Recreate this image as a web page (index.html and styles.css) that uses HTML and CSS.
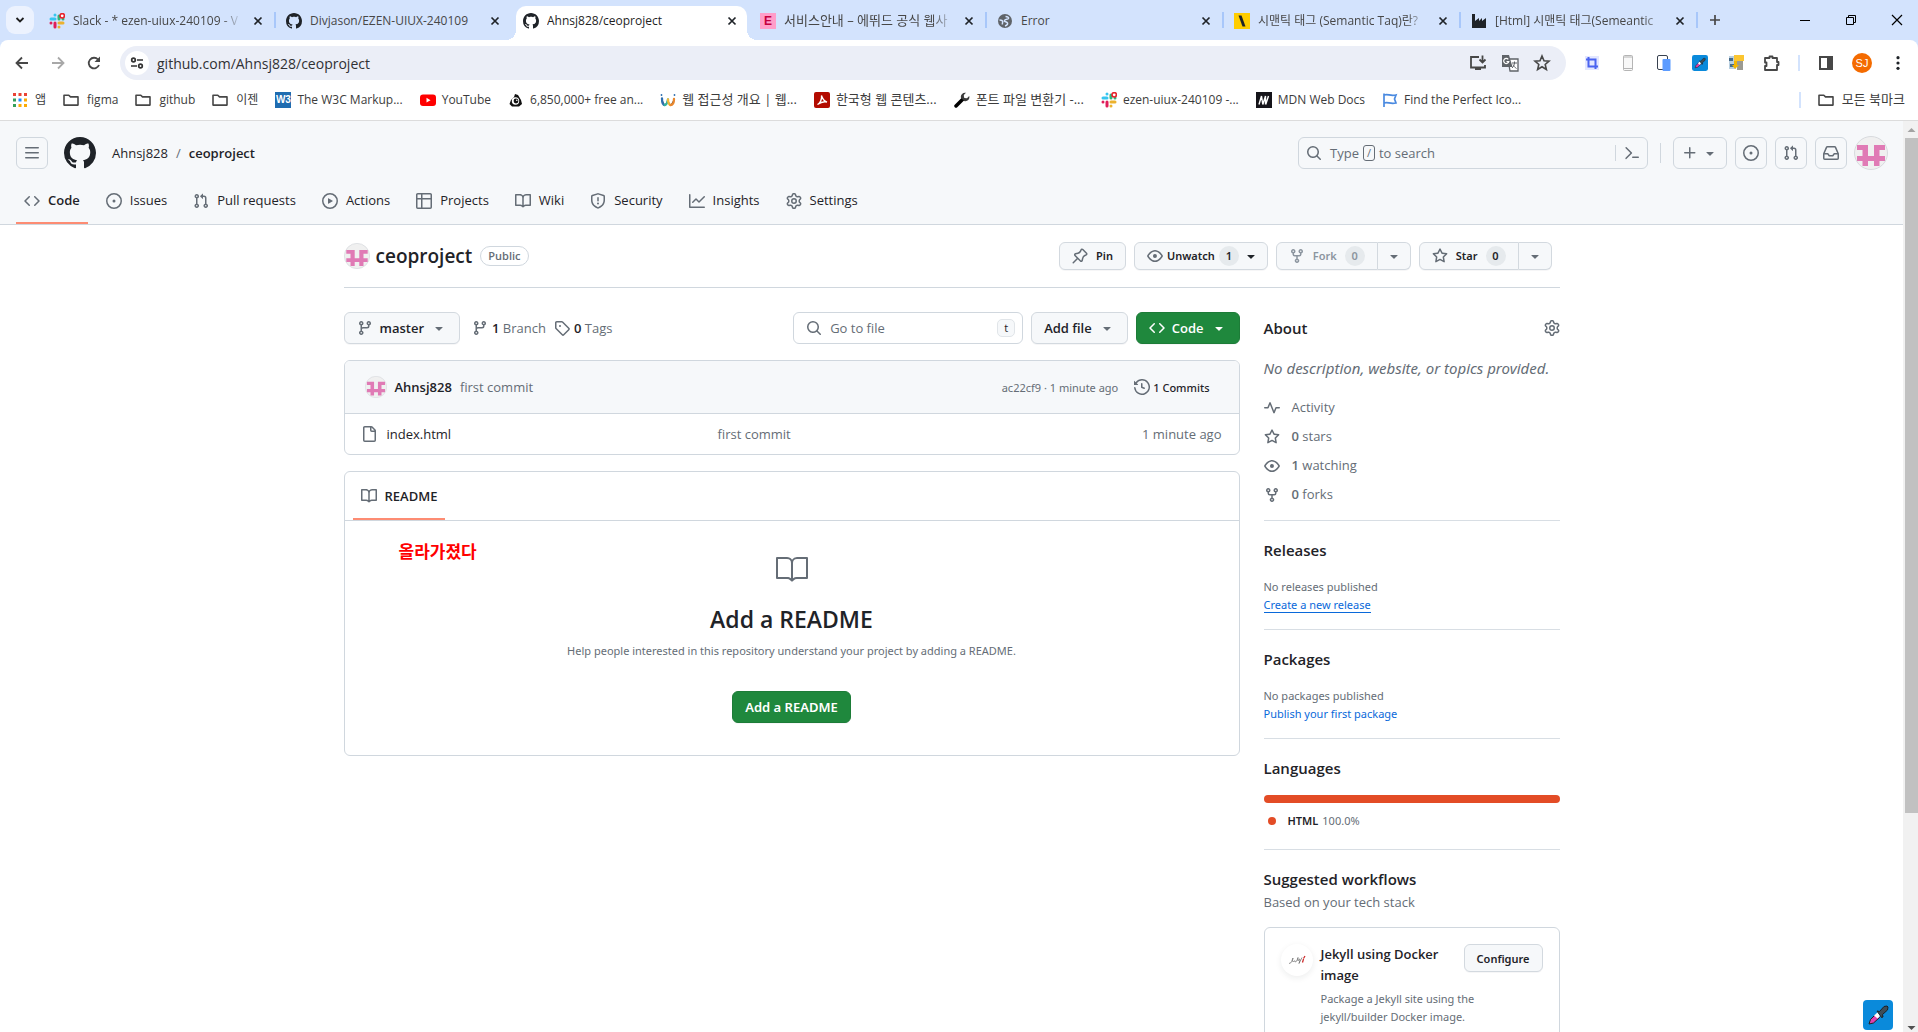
FILE: index.html
```html
<!DOCTYPE html>
<html lang="ko">
<head>
<meta charset="utf-8">
<title>Ahnsj828/ceoproject</title>
<link rel="stylesheet" href="styles.css">
</head>
<body>
<svg class="sprite" aria-hidden="true">
  <symbol id="mark" viewBox="0 0 16 16"><path d="M8 0c4.42 0 8 3.58 8 8a8.013 8.013 0 0 1-5.45 7.59c-.4.08-.55-.17-.55-.38 0-.27.01-1.13.01-2.2 0-.75-.25-1.23-.54-1.48 1.78-.2 3.65-.88 3.65-3.95 0-.88-.31-1.59-.82-2.15.08-.2.36-1.02-.08-2.12 0 0-.67-.22-2.2.82-.64-.18-1.32-.27-2-.27-.68 0-1.36.09-2 .27-1.53-1.03-2.2-.82-2.2-.82-.44 1.1-.16 1.92-.08 2.12-.51.56-.82 1.28-.82 2.15 0 3.06 1.86 3.75 3.64 3.95-.23.2-.44.55-.51 1.07-.46.21-1.61.55-2.33-.66-.15-.24-.6-.83-1.23-.82-.67.01-.27.38.01.53.34.19.73.9.82 1.13.16.45.68 1.31 2.69.94 0 .67.01 1.3.01 1.49 0 .21-.15.45-.55.38A7.995 7.995 0 0 1 0 8c0-4.42 3.58-8 8-8Z"/></symbol>
  <symbol id="bars" viewBox="0 0 16 16"><path d="M1 2.75A.75.75 0 0 1 1.75 2h12.5a.75.75 0 0 1 0 1.5H1.75A.75.75 0 0 1 1 2.75Zm0 5A.75.75 0 0 1 1.75 7h12.5a.75.75 0 0 1 0 1.5H1.75A.75.75 0 0 1 1 7.75ZM1.75 12h12.5a.75.75 0 0 1 0 1.5H1.75a.75.75 0 0 1 0-1.5Z"/></symbol>
  <symbol id="code" viewBox="0 0 16 16"><path d="m11.28 3.22 4.25 4.25a.75.75 0 0 1 0 1.06l-4.25 4.25a.749.749 0 0 1-1.275-.326.749.749 0 0 1 .215-.734L13.94 8l-3.72-3.72a.749.749 0 0 1 .326-1.275.749.749 0 0 1 .734.215Zm-6.56 0a.751.751 0 0 1 1.042.018.751.751 0 0 1 .018 1.042L2.06 8l3.72 3.72a.749.749 0 0 1-.326 1.275.749.749 0 0 1-.734-.215L.47 8.53a.75.75 0 0 1 0-1.06Z"/></symbol>
  <symbol id="issue" viewBox="0 0 16 16"><path d="M8 9.5a1.5 1.5 0 1 0 0-3 1.5 1.5 0 0 0 0 3Z"/><path d="M8 0a8 8 0 1 1 0 16A8 8 0 0 1 8 0ZM1.5 8a6.5 6.5 0 1 0 13 0 6.5 6.5 0 0 0-13 0Z"/></symbol>
  <symbol id="pr" viewBox="0 0 16 16"><path d="M1.5 3.25a2.25 2.25 0 1 1 3 2.122v5.256a2.251 2.251 0 1 1-1.5 0V5.372A2.25 2.25 0 0 1 1.5 3.25Zm5.677-.177L9.573.677A.25.25 0 0 1 10 .854V2.5h1A2.5 2.5 0 0 1 13.5 5v5.628a2.251 2.251 0 1 1-1.5 0V5a1 1 0 0 0-1-1h-1v1.646a.25.25 0 0 1-.427.177L7.177 3.427a.25.25 0 0 1 0-.354ZM3.75 2.5a.75.75 0 1 0 0 1.5.75.75 0 0 0 0-1.5Zm0 9.5a.75.75 0 1 0 0 1.5.75.75 0 0 0 0-1.5Zm8.25.75a.75.75 0 1 0 1.5 0 .75.75 0 0 0-1.5 0Z"/></symbol>
  <symbol id="play" viewBox="0 0 16 16"><path d="M8 0a8 8 0 1 1 0 16A8 8 0 0 1 8 0ZM1.5 8a6.5 6.5 0 1 0 13 0 6.5 6.5 0 0 0-13 0Zm4.879-2.773 4.264 2.559a.25.25 0 0 1 0 .428l-4.264 2.559A.25.25 0 0 1 6 10.559V5.442a.25.25 0 0 1 .379-.215Z"/></symbol>
  <symbol id="table" viewBox="0 0 16 16"><path d="M0 1.75C0 .784.784 0 1.75 0h12.5C15.216 0 16 .784 16 1.75v12.5A1.75 1.75 0 0 1 14.25 16H1.75A1.75 1.75 0 0 1 0 14.25ZM6.5 6.5v8h7.75a.25.25 0 0 0 .25-.25V6.5Zm8-1.5V1.75a.25.25 0 0 0-.25-.25H6.5V5Zm-13 1.5v7.75c0 .138.112.25.25.25H5v-8ZM5 5V1.5H1.75a.25.25 0 0 0-.25.25V5Z"/></symbol>
  <symbol id="book" viewBox="0 0 16 16"><path d="M0 1.75A.75.75 0 0 1 .75 1h4.253c1.227 0 2.317.59 3 1.501A3.743 3.743 0 0 1 11.006 1h4.245a.75.75 0 0 1 .75.75v10.5a.75.75 0 0 1-.75.75h-4.507a2.25 2.25 0 0 0-1.591.659l-.622.621a.75.75 0 0 1-1.06 0l-.622-.621A2.25 2.25 0 0 0 5.258 13H.75a.75.75 0 0 1-.75-.75Zm7.251 10.324.004-5.073-.002-2.253A2.25 2.25 0 0 0 5.003 2.5H1.5v9h3.757a3.75 3.75 0 0 1 1.994.574ZM8.755 4.75l-.004 7.322a3.752 3.752 0 0 1 1.992-.572H14.5v-9h-3.495a2.25 2.25 0 0 0-2.25 2.25Z"/></symbol>
  <symbol id="book-lg" viewBox="0 0 24 24"><path d="M0 3.75A.75.75 0 0 1 .75 3h7.497c1.566 0 2.945.8 3.751 2.014A4.495 4.495 0 0 1 15.75 3h7.5a.75.75 0 0 1 .75.75v15.063a.752.752 0 0 1-.755.75l-7.682-.052a3 3 0 0 0-2.142.878l-.89.891a.75.75 0 0 1-1.061 0l-.902-.901a2.996 2.996 0 0 0-2.121-.879H.75a.75.75 0 0 1-.75-.75Zm12.75 15.232a4.503 4.503 0 0 1 2.823-.971l6.927.047V4.5h-6.75a3 3 0 0 0-3 3ZM11.247 7.497a3 3 0 0 0-3-2.997H1.5V18h6.947c1.018 0 2.006.346 2.803.98Z"/></symbol>
  <symbol id="shield" viewBox="0 0 16 16"><path d="M7.467.133a1.748 1.748 0 0 1 1.066 0l5.25 1.68A1.75 1.75 0 0 1 15 3.48V7c0 1.566-.32 3.182-1.303 4.682-.983 1.498-2.585 2.813-5.032 3.855a1.697 1.697 0 0 1-1.33 0c-2.447-1.042-4.049-2.357-5.032-3.855C1.32 10.182 1 8.566 1 7V3.48a1.75 1.75 0 0 1 1.217-1.667Zm.61 1.429a.25.25 0 0 0-.153 0l-5.25 1.68a.25.25 0 0 0-.174.238V7c0 1.358.275 2.666 1.057 3.86.784 1.194 2.121 2.34 4.366 3.297a.196.196 0 0 0 .154 0c2.245-.956 3.582-2.104 4.366-3.298C13.225 9.666 13.5 8.36 13.5 7V3.48a.251.251 0 0 0-.174-.237l-5.25-1.68ZM8.75 4.75v3a.75.75 0 0 1-1.5 0v-3a.75.75 0 0 1 1.5 0ZM9 10.5a1 1 0 1 1-2 0 1 1 0 0 1 2 0Z"/></symbol>
  <symbol id="graph" viewBox="0 0 16 16"><path d="M1.5 1.75V13.5h13.75a.75.75 0 0 1 0 1.5H.75a.75.75 0 0 1-.75-.75V1.75a.75.75 0 0 1 1.5 0Zm14.28 2.53-5.25 5.25a.75.75 0 0 1-1.06 0L7 7.06 4.28 9.78a.751.751 0 0 1-1.042-.018.751.751 0 0 1-.018-1.042l3.25-3.25a.75.75 0 0 1 1.06 0L10 7.94l4.72-4.72a.751.751 0 0 1 1.042.018.751.751 0 0 1 .018 1.042Z"/></symbol>
  <symbol id="gear" viewBox="0 0 16 16"><path d="M8 0a8.2 8.2 0 0 1 .701.031C9.444.095 9.99.645 10.16 1.29l.288 1.107c.018.066.079.158.212.224.231.114.454.243.668.386.123.082.233.09.299.071l1.103-.303c.644-.176 1.392.021 1.82.63.27.385.506.792.704 1.218.315.675.111 1.422-.364 1.891l-.814.806c-.049.048-.098.147-.088.294.016.257.016.515 0 .772-.01.147.038.246.088.294l.814.806c.475.469.679 1.216.364 1.891a7.977 7.977 0 0 1-.704 1.217c-.428.61-1.176.807-1.82.63l-1.102-.302c-.067-.019-.177-.011-.3.071a5.909 5.909 0 0 1-.668.386c-.133.066-.194.158-.211.224l-.29 1.106c-.168.646-.715 1.196-1.458 1.26a8.006 8.006 0 0 1-1.402 0c-.743-.064-1.289-.614-1.458-1.26l-.289-1.106c-.018-.066-.079-.158-.212-.224a5.738 5.738 0 0 1-.668-.386c-.123-.082-.233-.09-.299-.071l-1.103.303c-.644.176-1.392-.021-1.82-.63a8.12 8.12 0 0 1-.704-1.218c-.315-.675-.111-1.422.363-1.891l.815-.806c.05-.048.098-.147.088-.294a6.214 6.214 0 0 1 0-.772c.01-.147-.038-.246-.088-.294l-.815-.806C.635 6.045.431 5.298.746 4.623a7.92 7.92 0 0 1 .704-1.217c.428-.61 1.176-.807 1.82-.63l1.102.302c.067.019.177.011.3-.071.214-.143.437-.272.668-.386.133-.066.194-.158.211-.224l.29-1.106C6.009.645 6.556.095 7.299.03 7.53.01 7.764 0 8 0Zm-.571 1.525c-.036.003-.108.036-.137.146l-.289 1.105c-.147.561-.549.967-.998 1.189-.173.086-.34.183-.5.29-.417.278-.97.423-1.529.27l-1.103-.303c-.109-.03-.175.016-.195.045-.22.312-.412.644-.573.99-.014.031-.021.11.059.19l.815.806c.411.406.562.957.53 1.456a4.709 4.709 0 0 0 0 .582c.032.499-.119 1.05-.53 1.456l-.815.806c-.081.08-.073.159-.059.19.162.346.353.677.573.989.02.03.085.076.195.046l1.102-.303c.56-.153 1.113-.008 1.53.27.161.107.328.204.501.29.447.222.85.629.997 1.189l.289 1.105c.029.109.101.143.137.146a6.6 6.6 0 0 0 1.142 0c.036-.003.108-.036.137-.146l.289-1.105c.147-.561.549-.967.998-1.189.173-.086.34-.183.5-.29.417-.278.97-.423 1.529-.27l1.103.303c.109.029.175-.016.195-.045.22-.313.411-.644.573-.99.014-.031.021-.11-.059-.19l-.815-.806c-.411-.406-.562-.957-.53-1.456a4.709 4.709 0 0 0 0-.582c-.032-.499.119-1.05.53-1.456l.815-.806c.081-.08.073-.159.059-.19a6.464 6.464 0 0 0-.573-.989c-.02-.03-.085-.076-.195-.046l-1.102.303c-.56.153-1.113.008-1.53-.27a4.44 4.44 0 0 0-.501-.29c-.447-.222-.85-.629-.997-1.189l-.289-1.105c-.029-.11-.101-.143-.137-.146a6.6 6.6 0 0 0-1.142 0ZM11 8a3 3 0 1 1-6 0 3 3 0 0 1 6 0ZM9.5 8a1.5 1.5 0 1 0-3.001.001A1.5 1.5 0 0 0 9.5 8Z"/></symbol>
  <symbol id="search" viewBox="0 0 16 16"><path d="M10.68 11.74a6 6 0 0 1-7.922-8.982 6 6 0 0 1 8.982 7.922l3.04 3.04a.749.749 0 0 1-.326 1.275.749.749 0 0 1-.734-.215ZM11.5 7a4.499 4.499 0 1 0-8.997 0A4.499 4.499 0 0 0 11.5 7Z"/></symbol>
  <symbol id="inbox" viewBox="0 0 16 16"><path d="M2.8 2.06A1.75 1.75 0 0 1 4.41 1h7.18c.7 0 1.333.417 1.61 1.06l2.74 6.395c.04.093.06.194.06.295v4.5A1.75 1.75 0 0 1 14.25 15H1.75A1.75 1.75 0 0 1 0 13.25v-4.5c0-.101.02-.202.06-.295Zm1.61.44a.25.25 0 0 0-.23.152L1.887 8H4.75a.75.75 0 0 1 .6.3L6.625 10h2.75l1.275-1.7a.75.75 0 0 1 .6-.3h2.863L11.82 2.652a.25.25 0 0 0-.23-.152Zm10.09 7h-2.875l-1.275 1.7a.75.75 0 0 1-.6.3h-3.5a.75.75 0 0 1-.6-.3L4.375 9.5H1.5v3.75c0 .138.112.25.25.25h12.5a.25.25 0 0 0 .25-.25Z"/></symbol>
  <symbol id="caret" viewBox="0 0 16 16"><path d="m4.427 7.427 3.396 3.396a.25.25 0 0 0 .354 0l3.396-3.396A.25.25 0 0 0 11.396 7H4.604a.25.25 0 0 0-.177.427Z"/></symbol>
  <symbol id="plus" viewBox="0 0 16 16"><path d="M7.75 2a.75.75 0 0 1 .75.75V7h4.25a.75.75 0 0 1 0 1.5H8.5v4.25a.75.75 0 0 1-1.5 0V8.5H2.75a.75.75 0 0 1 0-1.5H7V2.75A.75.75 0 0 1 7.75 2Z"/></symbol>
  <symbol id="prompt" viewBox="0 0 16 16"><path d="m6.354 8.04-4.773 4.773a.75.75 0 1 0 1.061 1.06L7.945 8.57a.75.75 0 0 0 0-1.06L2.642 2.206a.75.75 0 0 0-1.06 1.061L6.353 8.04ZM8.75 11.5a.75.75 0 0 0 0 1.5h5.5a.75.75 0 0 0 0-1.5h-5.5Z"/></symbol>
  <symbol id="branch" viewBox="0 0 16 16"><path d="M9.5 3.25a2.25 2.25 0 1 1 3 2.122V6A2.5 2.5 0 0 1 10 8.5H6a1 1 0 0 0-1 1v1.128a2.251 2.251 0 1 1-1.5 0V5.372a2.25 2.25 0 1 1 1.5 0v1.836A2.493 2.493 0 0 1 6 7h4a1 1 0 0 0 1-1v-.628A2.25 2.25 0 0 1 9.5 3.25Zm-6 0a.75.75 0 1 0 1.5 0 .75.75 0 0 0-1.5 0Zm8.25-.75a.75.75 0 1 0 0 1.5.75.75 0 0 0 0-1.5ZM4.25 12a.75.75 0 1 0 0 1.5.75.75 0 0 0 0-1.5Z"/></symbol>
  <symbol id="tag" viewBox="0 0 16 16"><path d="M1 7.775V2.75C1 1.784 1.784 1 2.75 1h5.025c.464 0 .91.184 1.238.513l6.25 6.25a1.75 1.75 0 0 1 0 2.474l-5.026 5.026a1.75 1.75 0 0 1-2.474 0l-6.25-6.25A1.752 1.752 0 0 1 1 7.775Zm1.5 0c0 .066.026.13.073.177l6.25 6.25a.25.25 0 0 0 .354 0l5.025-5.025a.25.25 0 0 0 0-.354l-6.25-6.25a.25.25 0 0 0-.177-.073H2.75a.25.25 0 0 0-.25.25ZM6 5a1 1 0 1 1 0 2 1 1 0 0 1 0-2Z"/></symbol>
  <symbol id="history" viewBox="0 0 16 16"><path d="m.427 1.927 1.215 1.215a8.002 8.002 0 1 1-1.6 5.685.75.75 0 1 1 1.493-.154 6.5 6.5 0 1 0 1.18-4.458l1.358 1.358A.25.25 0 0 1 3.896 6H.25A.25.25 0 0 1 0 5.75V2.104a.25.25 0 0 1 .427-.177ZM7.75 4a.75.75 0 0 1 .75.75v2.992l2.028.812a.75.75 0 0 1-.557 1.392l-2.5-1A.751.751 0 0 1 7 8.25v-3.5A.75.75 0 0 1 7.75 4Z"/></symbol>
  <symbol id="file" viewBox="0 0 16 16"><path d="M2 1.75C2 .784 2.784 0 3.75 0h6.586c.464 0 .909.184 1.237.513l2.914 2.914c.329.328.513.773.513 1.237v9.586A1.75 1.75 0 0 1 13.25 16h-9.5A1.75 1.75 0 0 1 2 14.25Zm1.75-.25a.25.25 0 0 0-.25.25v12.5c0 .138.112.25.25.25h9.5a.25.25 0 0 0 .25-.25V6h-2.75A1.75 1.75 0 0 1 9 4.25V1.5Zm6.75.062V4.25c0 .138.112.25.25.25h2.688l-.011-.013-2.914-2.914-.013-.011Z"/></symbol>
  <symbol id="pin" viewBox="0 0 16 16"><path d="m11.294.984 3.722 3.722a1.75 1.75 0 0 1-.504 2.826l-1.327.613a3.089 3.089 0 0 0-1.707 2.084l-.584 2.454c-.317 1.332-1.972 1.8-2.94.832L5.75 11.311 1.78 15.28a.749.749 0 1 1-1.06-1.06l3.969-3.97-2.204-2.204c-.968-.968-.5-2.623.832-2.94l2.454-.584a3.08 3.08 0 0 0 2.084-1.707l.613-1.327a1.75 1.75 0 0 1 2.826-.504ZM6.283 9.723l2.732 2.731a.25.25 0 0 0 .42-.119l.584-2.454a4.586 4.586 0 0 1 2.537-3.098l1.328-.613a.25.25 0 0 0 .072-.404l-3.722-3.722a.25.25 0 0 0-.404.072l-.613 1.328a4.584 4.584 0 0 1-3.098 2.537l-2.454.584a.25.25 0 0 0-.119.42l2.731 2.732Z"/></symbol>
  <symbol id="eye" viewBox="0 0 16 16"><path d="M8 2c1.981 0 3.671.992 4.933 2.078 1.27 1.091 2.187 2.345 2.637 3.023a1.62 1.62 0 0 1 0 1.798c-.45.678-1.367 1.932-2.637 3.023C11.67 13.008 9.981 14 8 14c-1.981 0-3.671-.992-4.933-2.078C1.797 10.83.88 9.576.43 8.898a1.62 1.62 0 0 1 0-1.798c.45-.677 1.367-1.931 2.637-3.022C4.33 2.992 6.019 2 8 2ZM1.679 7.932a.12.12 0 0 0 0 .136c.411.622 1.241 1.75 2.366 2.717C5.176 11.758 6.527 12.5 8 12.5c1.473 0 2.825-.742 3.955-1.715 1.124-.967 1.954-2.096 2.366-2.717a.12.12 0 0 0 0-.136c-.412-.621-1.242-1.75-2.366-2.717C10.824 4.242 9.473 3.5 8 3.5c-1.473 0-2.825.742-3.955 1.715-1.124.967-1.954 2.096-2.366 2.717ZM8 10a2 2 0 1 1-.001-3.999A2 2 0 0 1 8 10Z"/></symbol>
  <symbol id="fork" viewBox="0 0 16 16"><path d="M5 5.372v.878c0 .414.336.75.75.75h4.5a.75.75 0 0 0 .75-.75v-.878a2.25 2.25 0 1 1 1.5 0v.878a2.25 2.25 0 0 1-2.25 2.25h-1.5v2.128a2.251 2.251 0 1 1-1.5 0V8.5h-1.5A2.25 2.25 0 0 1 3.5 6.25v-.878a2.25 2.25 0 1 1 1.5 0ZM5 3.25a.75.75 0 1 0-1.5 0 .75.75 0 0 0 1.5 0Zm6.75.75a.75.75 0 1 0 0-1.5.75.75 0 0 0 0 1.5Zm-3 8.75a.75.75 0 1 0-1.5 0 .75.75 0 0 0 1.5 0Z"/></symbol>
  <symbol id="star" viewBox="0 0 16 16"><path d="M8 .25a.75.75 0 0 1 .673.418l1.882 3.815 4.21.612a.75.75 0 0 1 .416 1.279l-3.046 2.97.719 4.192a.751.751 0 0 1-1.088.791L8 12.347l-3.766 1.98a.75.75 0 0 1-1.088-.79l.72-4.194L.818 6.374a.75.75 0 0 1 .416-1.28l4.21-.611L7.327.668A.75.75 0 0 1 8 .25Zm0 2.445L6.615 5.5a.75.75 0 0 1-.564.41l-3.097.45 2.24 2.184a.75.75 0 0 1 .216.664l-.528 3.084 2.769-1.456a.75.75 0 0 1 .698 0l2.77 1.456-.53-3.084a.75.75 0 0 1 .216-.664l2.24-2.183-3.096-.45a.75.75 0 0 1-.564-.41L8 2.694Z"/></symbol>
  <symbol id="pulse" viewBox="0 0 16 16"><path d="M6 2c.306 0 .582.187.696.471L10 10.731l1.304-3.26A.751.751 0 0 1 12 7h3.25a.75.75 0 0 1 0 1.5h-2.742l-1.812 4.528a.751.751 0 0 1-1.392 0L6 4.77 4.696 8.03A.75.75 0 0 1 4 8.5H.75a.75.75 0 0 1 0-1.5h2.742l1.812-4.529A.751.751 0 0 1 6 2Z"/></symbol>
  <symbol id="avatar" viewBox="0 0 34 34"><circle cx="17" cy="17" r="16.5" fill="#f0f0f0" stroke="#d8dade"/><path fill="#e07ab5" d="M3 9h11v11h6V9h11v5h-5.500v6H31v5h-5.500v5H20v-5h-6v5H8.500v-5H3v-5h5.500v-6H3z"/></symbol>
  <symbol id="close" viewBox="0 0 16 16"><path d="M4.500 4.500l7 7m0-7l-7 7" stroke="currentColor" stroke-width="1.700" fill="none"/></symbol>
  <symbol id="folder" viewBox="0 0 16 16"><path d="M1 3.200h4.800l1.700 1.700H15v8.200H1z" fill="none" stroke="#474747" stroke-width="1.600" stroke-linejoin="round"/></symbol>
  <symbol id="slack" viewBox="0 0 16 16"><g stroke-width="3" stroke-linecap="round"><path d="M6 2v0M2 6h4" stroke="#36c5f0"/><path d="M10 3v3M14 6v0" stroke="#2eb67d"/><path d="M6 10v4M2 10v0" stroke="#e01e5a"/><path d="M10 10h4M10 14v0" stroke="#ecb22e"/></g><circle cx="13.200" cy="2.800" r="2.200" fill="#fff" stroke="#e8232c" stroke-width="1.600"/></symbol>
  <symbol id="dropper" viewBox="0 0 30 30"><rect width="30" height="30" rx="4" fill="#0a8adb"/><path d="M6 24l1.500-4.500 5.500-5.500 3.500 3.500-6 5.500z" fill="#e13fae" stroke="#222" stroke-width="1"/><path d="M11 15.500l4-3.500 3 3-3.500 3.500z" fill="#fff"/><path d="M14 11l2.500.5L21 6.500l3-.5 1 1-.5 3-5 4.500.5 2.500-1.500.5z" fill="#3d4d58" stroke="#1c2024" stroke-width="1"/></symbol>
</svg>

<header class="chrome">
  <div class="tabstrip">
    <button class="tab-search" aria-label="탭 검색"><svg class="i16" viewBox="0 0 16 16"><path d="M4.500 6l3.500 3.500L11.500 6" fill="none" stroke="#1f1f1f" stroke-width="1.800"/></svg></button>
    <div class="tabs">
      <div class="tab sep"><svg class="i16"><use href="#slack"/></svg><span class="tab-title fade">Slack - * ezen-uiux-240109 - V</span><button class="tab-x" aria-label="닫기"><svg class="i16"><use href="#close"/></svg></button></div>
      <div class="tab"><svg class="i16"><use href="#mark"/></svg><span class="tab-title">Divjason/EZEN-UIUX-240109</span><button class="tab-x" aria-label="닫기"><svg class="i16"><use href="#close"/></svg></button></div>
      <div class="tab active"><svg class="i16"><use href="#mark"/></svg><span class="tab-title">Ahnsj828/ceoproject</span><button class="tab-x" aria-label="닫기"><svg class="i16"><use href="#close"/></svg></button></div>
      <div class="tab sep"><span class="fav fav-e">E</span><span class="tab-title fade ko">서비스안내 – 에뛰드 공식 웹사</span><button class="tab-x" aria-label="닫기"><svg class="i16"><use href="#close"/></svg></button></div>
      <div class="tab sep"><svg class="i16" viewBox="0 0 16 16"><circle cx="8" cy="8" r="7" fill="#5f6368"/><path d="M8.500 3.500c2 0 3.500.8 3 2S8 6 7.500 7.500 10 8.500 10.500 10 9.500 12.500 8 13M2.500 7c1.500 0 3 .5 3.200 1.500s-.7 1.500-.2 3" stroke="#d3e3fd" stroke-width="1.500" fill="none"/></svg><span class="tab-title">Error</span><button class="tab-x" aria-label="닫기"><svg class="i16"><use href="#close"/></svg></button></div>
      <div class="tab sep"><svg class="i16" viewBox="0 0 16 16"><path d="M0 0h16v16H0z" fill="#ffcd00"/><path d="M4.500 2.500h3l4 11h-3z"/></svg><span class="tab-title fade">시맨틱 태그 (Semantic Taq)란?</span><button class="tab-x" aria-label="닫기"><svg class="i16"><use href="#close"/></svg></button></div>
      <div class="tab sep"><svg class="i16" viewBox="0 0 16 16"><path d="M1 15V1h3v7l4-3v3l3-3v3l4-3v10z"/></svg><span class="tab-title fade">[Html] 시맨틱 태그(Semeantic</span><button class="tab-x" aria-label="닫기"><svg class="i16"><use href="#close"/></svg></button></div>
      <button class="tab-new" aria-label="새 탭"><svg class="i16" viewBox="0 0 16 16"><path d="M8 3v10M3 8h10" stroke="#474747" stroke-width="1.700"/></svg></button>
    </div>
    <div class="winctl">
      <button aria-label="최소화"><svg class="i16" viewBox="0 0 16 16"><path d="M3 8.500h10" stroke="#000"/></svg></button>
      <button aria-label="복원"><svg class="i16" viewBox="0 0 16 16"><path d="M3.500 5.500h7v7h-7zM5.500 5.500v-2h7v7h-2" fill="none" stroke="#000"/></svg></button>
      <button aria-label="창 닫기"><svg class="i16" viewBox="0 0 16 16"><path d="M3 3l10 10M13 3L3 13" stroke="#000" stroke-width="1.200"/></svg></button>
    </div>
  </div>

  <div class="toolbar">
    <button class="tool" aria-label="뒤로"><svg class="i16" viewBox="0 0 16 16"><path d="M14 8H3M8 2.500L2.500 8 8 13.500" fill="none" stroke="#474747" stroke-width="1.800"/></svg></button>
    <button class="tool" aria-label="앞으로"><svg class="i16" viewBox="0 0 16 16"><path d="M2 8h11M8 2.500L13.500 8 8 13.500" fill="none" stroke="#a8a8a8" stroke-width="1.800"/></svg></button>
    <button class="tool" aria-label="새로고침"><svg class="i16" viewBox="0 0 16 16"><path d="M13 10A5.300 5.300 0 1 1 12 4.500L13.500 6" fill="none" stroke="#474747" stroke-width="1.800"/><path d="M14 1.500V7H8.500z" fill="#474747"/></svg></button>
    <div class="omnibox">
      <button class="site-info" aria-label="사이트 정보"><svg class="i16" viewBox="0 0 16 16"><g fill="none" stroke="#333" stroke-width="1.700"><circle cx="4.500" cy="5" r="1.800"/><path d="M8 5h6M2 11h6"/><circle cx="11.500" cy="11" r="1.800"/></g></svg></button>
      <input class="url" aria-label="주소" value="github.com/Ahnsj828/ceoproject">
      <button class="omni-btn" aria-label="설치"><svg class="i18" viewBox="0 0 18 18"><path d="M10 3H2v10.500h14V11" fill="none" stroke="#474747" stroke-width="1.800"/><path d="M6 15h6M13.500 1.500V8M10.500 5.500l3 3 3-3" fill="none" stroke="#474747" stroke-width="1.800"/></svg></button>
      <button class="omni-btn" aria-label="번역"><svg class="i18" viewBox="0 0 18 18"><path d="M7 5h10v12H9z" fill="#fff" stroke="#5f6368" stroke-width="1.300"/><path d="M1 1h7l3.500 12H1z" fill="#5f6368"/><path d="M7.300 5.300A2.600 2.600 0 1 0 7.800 7.600H5.500" fill="none" stroke="#fff" stroke-width="1.200"/><path d="M11 9h5M13.500 7.500V9c0 2-1 3.500-2.500 5M12 10.500c.7 1.500 1.800 3 3.500 4" fill="none" stroke="#5f6368"/></svg></button>
      <button class="omni-btn" aria-label="북마크"><svg class="i18" viewBox="0 0 18 18"><path d="M9 2l2 4.800 5 .4-3.800 3.300 1.200 5L9 12.800l-4.400 2.700 1.200-5L2 7.200l5-.4z" fill="none" stroke="#474747" stroke-width="1.600"/></svg></button>
    </div>
    <div class="exts">
      <button class="tool" aria-label="캡처"><svg class="i16" viewBox="0 0 16 16"><path d="M1 1h14v14H1z" fill="#e3e7ff"/><path d="M4.500 2v9.500H14M2 4.500h9.500V14" fill="none" stroke="#4a63f0" stroke-width="2"/></svg></button>
      <button class="tool" aria-label="모바일"><svg class="i16" viewBox="0 0 16 16"><rect x="3.500" y=".5" width="9" height="15" rx="1" fill="#f8f8f8" stroke="#b5b5b5"/><path d="M3.500 2h9M3.500 13.500h9" stroke="#b5b5b5"/></svg></button>
      <button class="tool" aria-label="반응형"><svg class="i16" viewBox="0 0 16 16"><rect x="1.500" y=".5" width="10" height="14" rx="1.500" fill="#fff" stroke="#38414f"/><rect x="6.500" y="4" width="8" height="12" rx="1" fill="#5b9bff"/></svg></button>
      <button class="tool" aria-label="색상 추출"><svg class="i16"><use href="#dropper"/></svg></button>
      <button class="tool" aria-label="전체 캡처"><svg class="i16" viewBox="0 0 16 16"><path d="M1 1h7v13H1z" fill="#b8cfe0"/><path d="M1 3h4v3H1zM2 9h4v3H2z" fill="#456a8a"/><path d="M6 0h10v6H6z" fill="#fbc530"/><path d="M9 6h6v9H9z" fill="#9b9a92"/><path d="M6 6h3v4h2l-4 4-3-4h2z" fill="#f2b400"/></svg></button>
      <button class="tool" aria-label="확장 프로그램"><svg class="i18" viewBox="0 0 18 18"><path d="M2 4h4.500V2.500h3V4H14v4h1.500v3H14v5H2v-4h1.500V8.500H2z" fill="none" stroke="#474747" stroke-width="1.800" stroke-linejoin="round"/></svg></button>
      <span class="vline"></span>
      <button class="tool" aria-label="측면 패널"><svg class="i16" viewBox="0 0 16 16"><rect x="2" y="2" width="12" height="12" fill="none" stroke="#474747" stroke-width="2"/><path d="M9 2h5v12H9z" fill="#474747"/></svg></button>
      <button class="tool" aria-label="프로필"><span class="profile">SJ</span></button>
      <button class="tool" aria-label="메뉴"><svg class="i16" viewBox="0 0 16 16" fill="#474747"><circle cx="8" cy="2.700" r="1.600"/><circle cx="8" cy="8" r="1.600"/><circle cx="8" cy="13.300" r="1.600"/></svg></button>
    </div>
  </div>

  <nav class="bookmarks">
    <a class="bm bm-folder" href="#"><svg class="i14" viewBox="0 0 14 14"><path d="M0 0h3v3H0z" fill="#ea4335"/><path d="M5.500 0h3v3h-3zM11 0h3v3h-3z" fill="#ea4335"/><path d="M0 5.500h3v3H0zM0 11h3v3H0z" fill="#34a05a"/><path d="M5.500 5.500h3v3h-3z" fill="#1a8cff"/><path d="M5.500 11h3v3h-3zM11 5.500h3v3h-3zM11 11h3v3h-3z" fill="#fbab05"/></svg>앱</a>
    <a class="bm bm-folder" href="#"><svg class="i16"><use href="#folder"/></svg>figma</a>
    <a class="bm bm-folder" href="#"><svg class="i16"><use href="#folder"/></svg>github</a>
    <a class="bm bm-folder" href="#"><svg class="i16"><use href="#folder"/></svg>이젠</a>
    <a class="bm" href="#"><span class="fav fav-w3">W3</span>The W3C Markup...</a>
    <a class="bm" href="#"><svg class="i16" viewBox="0 0 16 16"><rect y="2.500" width="16" height="11.500" rx="3" fill="#f00"/><path d="M6.500 5.800v4.800l4-2.400z" fill="#fff"/></svg>YouTube</a>
    <a class="bm" href="#"><svg class="i16" viewBox="0 0 16 16"><path d="M7 2l3 1 3 5 1 4-3 2.500H4L1.500 12 3 8l3-3z" fill="#111"/><circle cx="7.500" cy="9" r="3.700" fill="#fff"/><circle cx="8" cy="9" r="2.400" fill="#111"/><circle cx="8.800" cy="8.200" r=".8" fill="#fff"/></svg>6,850,000+ free an...</a>
    <a class="bm ko" href="#"><svg class="i16" viewBox="0 0 16 16" fill="none" stroke-width="2.300" stroke-linecap="round"><path d="M2 6.500c0 4 1 6.500 2.800 6.500" stroke="#2d6fb0"/><path d="M4.800 13C7 13 7.500 10 8 7.500" stroke="#35b39a"/><path d="M8 7.500c.2 3 .8 5.500 2.500 5.500" stroke="#f4b836"/><path d="M10.500 13c2.500 0 3.500-3 3.500-6" stroke="#e8872e"/><path d="M1.500 3v0M14.500 3v0" stroke="#2d6fb0" stroke-width="1.800"/></svg>웹 접근성 개요 | 웹...</a>
    <a class="bm ko" href="#"><svg class="i16" viewBox="0 0 16 16"><rect width="16" height="16" rx="2" fill="#b30b00"/><path d="M3.500 12.500C6 11.500 8 7.500 7.500 3.500c1 3.500 2.500 5.500 5.500 6.500-3-.7-6 0-9.500 2.500z" fill="none" stroke="#fff" stroke-width="1.300"/></svg>한국형 웹 콘텐츠...</a>
    <a class="bm ko" href="#"><svg class="i16" viewBox="0 0 16 16"><path d="M2 14l7-7" stroke="#000" stroke-width="3.500" stroke-linecap="round"/><path d="M12 .8L9.800 3l.3 2.900 2.900.3L15.200 4c1 3-1.700 6-5 5L7 6C6 3 9 0 12 .8z"/></svg>폰트 파일 변환기 -...</a>
    <a class="bm" href="#"><svg class="i16"><use href="#slack"/></svg>ezen-uiux-240109 -...</a>
    <a class="bm" href="#"><svg class="i16" viewBox="0 0 16 16"><path d="M0 0h16v16H0z" fill="#15141a"/><path d="M3 12.500L5.500 4 6.800 12.500 9.500 4v8.500M9.700 12.500L12.500 4" fill="none" stroke="#fff" stroke-width="1.400"/></svg>MDN Web Docs</a>
    <a class="bm" href="#"><svg class="i16" viewBox="0 0 16 16"><path d="M2 15V1.500M2 3c4-1.500 6 1.500 12 0l-1.500 4L14 11c-6 1.500-8-1.500-12 0" fill="none" stroke="#4a8ae0" stroke-width="1.700"/></svg>Find the Perfect Ico...</a>
    <span class="spring"></span>
    <span class="vline"></span>
    <a class="bm bm-folder ko" href="#"><svg class="i16"><use href="#folder"/></svg>모든 북마크</a>
  </nav>
</header>

<div class="viewport">
  <div class="page">
    <header class="gh-header">
      <div class="gh-top">
        <button class="sq" aria-label="Menu"><svg class="i16"><use href="#bars"/></svg></button>
        <a class="gh-logo" href="#" aria-label="GitHub"><svg class="i32"><use href="#mark"/></svg></a>
        <div class="crumbs"><a href="#">Ahnsj828</a><span class="slash">/</span><a class="strong" href="#">ceoproject</a></div>
        <span class="spring"></span>
        <div class="gh-search"><button class="gh-search-main"><svg class="i16"><use href="#search"/></svg><span class="hint">Type <kbd>/</kbd> to search</span></button><button class="gh-prompt" aria-label="Command palette"><svg class="i16"><use href="#prompt"/></svg></button></div>
        <span class="gh-divider"></span>
        <button class="sq sq-wide" aria-label="Create new"><svg class="i16"><use href="#plus"/></svg><svg class="i16"><use href="#caret"/></svg></button>
        <button class="sq" aria-label="Issues"><svg class="i16"><use href="#issue"/></svg></button>
        <button class="sq" aria-label="Pull requests"><svg class="i16"><use href="#pr"/></svg></button>
        <button class="sq" aria-label="Inbox"><svg class="i16"><use href="#inbox"/></svg></button>
        <button class="me" aria-label="Account"><svg class="i34"><use href="#avatar"/></svg></button>
      </div>
      <nav class="gh-nav">
        <a class="current" href="#"><svg class="i16"><use href="#code"/></svg>Code</a>
        <a href="#"><svg class="i16"><use href="#issue"/></svg>Issues</a>
        <a href="#"><svg class="i16"><use href="#pr"/></svg>Pull requests</a>
        <a href="#"><svg class="i16"><use href="#play"/></svg>Actions</a>
        <a href="#"><svg class="i16"><use href="#table"/></svg>Projects</a>
        <a href="#"><svg class="i16"><use href="#book"/></svg>Wiki</a>
        <a href="#"><svg class="i16"><use href="#shield"/></svg>Security</a>
        <a href="#"><svg class="i16"><use href="#graph"/></svg>Insights</a>
        <a href="#"><svg class="i16"><use href="#gear"/></svg>Settings</a>
      </nav>
    </header>

    <main class="repo">
      <div class="repo-head">
        <svg class="i26"><use href="#avatar"/></svg>
        <h1><a href="#">ceoproject</a></h1>
        <span class="badge">Public</span>
        <span class="spring"></span>
        <div class="actions">
          <button class="btn btn-sm"><svg class="i16"><use href="#pin"/></svg>Pin</button>
          <button class="btn btn-sm btn-watch"><svg class="i16"><use href="#eye"/></svg>Unwatch<span class="count">1</span><svg class="i16 dark"><use href="#caret"/></svg></button>
          <div class="group"><button class="btn btn-sm muted"><svg class="i16"><use href="#fork"/></svg>Fork<span class="count">0</span></button><button class="btn btn-sm drop" aria-label="Fork list"><svg class="i16"><use href="#caret"/></svg></button></div>
          <div class="group"><button class="btn btn-sm"><svg class="i16"><use href="#star"/></svg>Star<span class="count">0</span></button><button class="btn btn-sm drop" aria-label="Star list"><svg class="i16"><use href="#caret"/></svg></button></div>
        </div>
      </div>

      <div class="cols">
        <section class="files">
          <div class="filebar">
            <button class="btn btn-branch"><svg class="i16"><use href="#branch"/></svg>master<svg class="i16"><use href="#caret"/></svg></button>
            <a class="stat" href="#"><svg class="i16"><use href="#branch"/></svg><span><b>1</b> Branch</span></a>
            <a class="stat" href="#"><svg class="i16"><use href="#tag"/></svg><span><b>0</b> Tags</span></a>
            <span class="spring"></span>
            <label class="gofile"><svg class="i16"><use href="#search"/></svg><input type="text" placeholder="Go to file" aria-label="Go to file"><kbd>t</kbd></label>
            <button class="btn">Add file<svg class="i16"><use href="#caret"/></svg></button>
            <button class="btn btn-green"><svg class="i16"><use href="#code"/></svg>Code<svg class="i16"><use href="#caret"/></svg></button>
          </div>

          <div class="box">
            <div class="commit">
              <svg class="i22"><use href="#avatar"/></svg>
              <a class="author" href="#">Ahnsj828</a>
              <a class="msg" href="#">first commit</a>
              <span class="spring"></span>
              <span class="sha">ac22cf9 · 1 minute ago</span>
              <a class="commits" href="#"><svg class="i16"><use href="#history"/></svg>1 Commits</a>
            </div>
            <table class="listing">
              <tbody><tr>
                <td class="name"><div class="cell"><svg class="i16"><use href="#file"/></svg><a href="#">index.html</a></div></td>
                <td>first commit</td>
                <td class="when">1 minute ago</td>
              </tr></tbody>
            </table>
          </div>

          <div class="box readme">
            <nav class="readme-tabs"><a href="#"><svg class="i16"><use href="#book"/></svg>README</a></nav>
            <div class="readme-body">
              <p class="note">올라가졌다</p>
              <svg class="i32"><use href="#book-lg"/></svg>
              <h2>Add a README</h2>
              <p class="help">Help people interested in this repository understand your project by adding a README.</p>
              <button class="btn btn-green btn-add">Add a README</button>
            </div>
          </div>
        </section>

        <aside class="side">
          <section class="about">
            <div class="side-head"><h3>About</h3><button class="plain" aria-label="Edit"><svg class="i16"><use href="#gear"/></svg></button></div>
            <p class="desc">No description, website, or topics provided.</p>
            <ul class="facts">
              <li><svg class="i16"><use href="#pulse"/></svg><span>Activity</span></li>
              <li><svg class="i16"><use href="#star"/></svg><span><b>0</b> stars</span></li>
              <li><svg class="i16"><use href="#eye"/></svg><span><b>1</b> watching</span></li>
              <li><svg class="i16"><use href="#fork"/></svg><span><b>0</b> forks</span></li>
            </ul>
          </section>
          <section>
            <h3>Releases</h3>
            <p class="small">No releases published</p>
            <p class="small"><a class="underlined" href="#">Create a new release</a></p>
          </section>
          <section>
            <h3>Packages</h3>
            <p class="small">No packages published</p>
            <p class="small"><a href="#">Publish your first package</a></p>
          </section>
          <section class="langs">
            <h3>Languages</h3>
            <div class="bar"></div>
            <p class="lang"><span class="dot"></span><b>HTML</b> 100.0%</p>
          </section>
          <section>
            <h3>Suggested workflows</h3>
            <p class="sub">Based on your tech stack</p>
            <div class="card">
              <div class="card-logo"><svg viewBox="0 0 32 32"><path d="M8 19.500c3 0 3-4 4-5.500-.5 2.500-1 4 .5 3.500s1.500-1.500 1.500 0 2 0 3-4c-.5 4 0 4 1 2s1 1 0 4c1-2 2-4 3-6" fill="none" stroke="#666" stroke-width=".7"/><path d="M22.500 14.500l1.500-2.500M21.500 18.500l1-3.500" stroke="#c22" stroke-width="1.200"/></svg></div>
              <div class="card-text"><h4>Jekyll using Docker image</h4><p class="small">Package a Jekyll site using the jekyll/builder Docker image.</p></div>
              <button class="btn btn-sm">Configure</button>
            </div>
          </section>
        </aside>
      </div>
    </main>
  </div>

  <div class="scroll">
    <svg viewBox="0 0 15 17"><path d="M4.500 11h8l-4-4z" fill="#a3a3a3"/></svg>
    <div class="scroll-track"><div class="scroll-thumb"></div></div>
    <svg viewBox="0 0 15 17"><path d="M4.500 11h8l-4 4z" fill="#505050"/></svg>
  </div>
  <button class="picker" aria-label="Color picker"><svg viewBox="0 0 30 30"><use href="#dropper"/></svg></button>
</div>
</body>
</html>
```

FILE: styles.css
```css
* { box-sizing: border-box; }

:root {
  --fg: #1f2328;
  --muted: #656d76;
  --line: #d0d7de;
  --soft: #f6f8fa;
  --link: #0969da;
  --wide: "Noto Sans", "Noto Sans CJK KR", sans-serif;
}

body {
  margin: 0;
  height: 100vh;
  display: flex;
  flex-direction: column;
  overflow: hidden;
  background: #fff;
  color: var(--fg);
  font: 13px/21px "Open Sans", "Noto Sans CJK KR", sans-serif;
}

a { color: inherit; text-decoration: none; }
h1, h2, h3, h4, p, ul { margin: 0; padding: 0; }
h1, h2, h3, h4 { font-weight: 600; }
ul { list-style: none; }
b { font-weight: 600; }
button, input { font: inherit; color: inherit; margin: 0; padding: 0; border: 0; background: none; }
svg { display: block; flex: none; fill: currentColor; }

.sprite { display: none; }
.i14 { width: 14px; height: 14px; }
.i16 { width: 16px; height: 16px; }
.i18 { width: 18px; height: 18px; }
.i22 { width: 22px; height: 22px; }
.i26 { width: 26px; height: 26px; }
.i32 { width: 32px; height: 32px; }
.i34 { width: 34px; height: 34px; }
.spring { flex: 1; }

/* Browser frame */
.chrome { flex: none; font-size: 12px; background: #d3e3fd; }

.tabstrip { height: 40px; display: flex; padding-left: 6px; }
.tab-search {
  width: 28px; height: 28px; margin-top: 6px; border-radius: 9px;
  background: #ecf2fe; display: grid; place-items: center;
}
.tabs { flex: 1; min-width: 0; display: flex; margin-left: 5px; padding-top: 6px; }
.tab {
  position: relative; flex: 0 1 237px; min-width: 0; height: 34px;
  display: flex; align-items: center; gap: 8px; padding: 0 10px 5px 10px;
  color: #474747;
}
.tab svg:first-child { color: #1f2328; }
.tab.sep::after {
  content: ""; position: absolute; right: 0; top: 6px;
  width: 2px; height: 16px; background: #a8c7fa;
}
.tab-title { flex: 1; min-width: 0; overflow: hidden; white-space: nowrap; }
.fade {
  -webkit-mask-image: linear-gradient(to right, #000 88%, transparent);
  mask-image: linear-gradient(to right, #000 88%, transparent);
}
.ko { font-size: 13px; }
.tab.active { color: #1f1f1f; }
.tab.active::before {
  content: ""; position: absolute; inset: 0 3px; z-index: 0;
  background: #fff; border-radius: 10px 10px 0 0;
}
.tab.active > * { position: relative; z-index: 1; }
.tab.active::after {
  content: ""; position: absolute; left: -7px; right: -7px; bottom: 0; height: 10px;
  background:
    radial-gradient(circle at 0 0, transparent 10px, #fff 10px) left / 10px 10px no-repeat,
    radial-gradient(circle at 100% 0, transparent 10px, #fff 10px) right / 10px 10px no-repeat;
}
.tab-new { width: 34px; height: 28px; display: grid; place-items: center; }
.winctl { display: flex; margin-right: -2px; }
.winctl button { width: 46px; display: grid; place-items: center; }

.fav {
  flex: none; width: 16px; height: 16px; text-align: center;
  font: 700 12px/16px "Liberation Sans", sans-serif;
}
.fav-e { background: #ff9ec9; color: #c4003f; }
.fav-w3 { background: #1f6cb0; color: #fff; font-size: 10px; }

.toolbar {
  height: 40px; display: flex; align-items: center; padding: 6px 2px 0 4px;
  background: #fff; border-radius: 8px 8px 0 0;
}
.tool { width: 36px; height: 34px; display: grid; place-items: center; }
.omnibox {
  flex: 1; height: 34px; margin: 0 8px; padding: 0 8px 0 5px;
  display: flex; align-items: center; border-radius: 17px; background: #ebeef7;
}
.site-info {
  width: 24px; height: 24px; border-radius: 12px; background: #fff;
  display: grid; place-items: center;
}
.url { flex: 1; padding: 0 8px; color: #303134; font-size: 14px; }
.omni-btn { width: 32px; height: 32px; display: grid; place-items: center; }
.exts { display: flex; align-items: center; }
.vline { width: 2px; height: 16px; margin: 0 8px; background: #d3e3fd; }
.profile {
  width: 20px; height: 20px; border-radius: 10px; background: #f46b00; color: #fff;
  font: 11px/20px "Liberation Sans", sans-serif; text-align: center;
}

.bookmarks {
  height: 41px; display: flex; align-items: center; gap: 17px;
  padding: 0 13px 1px; background: #fff; border-bottom: 1px solid #dcdcdc;
}
.bookmarks .vline { margin: 0; }
.bm { display: flex; align-items: center; gap: 6px; white-space: nowrap; color: #3c3c3c; }
.bm-folder { gap: 8px; }

/* Scrolled page area */
.viewport { position: relative; flex: 1; min-height: 0; display: flex; overflow: hidden; }
.page { flex: 1; min-width: 0; overflow: hidden; }
.scroll { width: 15px; flex: none; display: flex; flex-direction: column; background: #f1f1f1; }
.scroll svg { height: 17px; }
.scroll-track { flex: 1; padding-left: 2px; }
.scroll-thumb { height: 77%; background: #c1c1c1; }
.picker { position: absolute; right: 25px; bottom: 2px; width: 30px; height: 30px; }

.gh-header { background: var(--soft); border-bottom: 1px solid var(--line); }
.gh-top { display: flex; align-items: center; padding: 15px 15px 7px 16px; }
.sq {
  width: 32px; height: 32px; margin-left: 8px; border: 1px solid var(--line); border-radius: 6px;
  color: var(--muted); display: flex; align-items: center; justify-content: center;
}
.sq:first-child { margin-left: 0; }
.sq-wide { width: 54px; gap: 4px; margin-left: 12px; }
.gh-logo { margin: 0 16px; }
.crumbs { display: flex; gap: 8px; }
.slash { color: var(--muted); }
.strong { font-weight: 600; }
.gh-search {
  width: 350px; height: 32px; display: flex; align-items: center;
  border: 1px solid var(--line); border-radius: 6px; color: var(--muted);
}
.gh-search-main { flex: 1; display: flex; align-items: center; gap: 8px; padding-left: 7px; }
.hint { display: flex; align-items: center; gap: 4px; }
.gh-search kbd {
  width: 12px; height: 16px; border: 1px solid var(--muted);
  border-radius: 3px; font: 11px/14px "Open Sans", sans-serif; text-align: center;
}
.gh-prompt { width: 32px; height: 16px; border-left: 1px solid var(--line); display: grid; place-items: center; }
.gh-divider { width: 1px; height: 20px; background: var(--line); margin-left: 12px; }
.me { margin-left: 7px; }

.gh-nav { display: flex; gap: 10px; padding: 0 16px; }
.gh-nav a { height: 47px; display: flex; align-items: center; gap: 8px; padding: 0 8px; }
.gh-nav svg { color: var(--muted); }
.gh-nav .current { font-weight: 600; box-shadow: inset 0 -2px #fd8c73; }

.repo { max-width: 1280px; margin: 0 auto; padding: 0 32px; }
.repo-head {
  display: flex; align-items: center; padding: 17px 8px 18px 0; height: 63px;
  border-bottom: 1px solid var(--line); margin-bottom: 24px;
}
.repo-head h1 { margin-left: 6px; font-size: 19px; line-height: 28px; }
.badge {
  margin-left: 8px; height: 20px; padding: 0 7px; border: 1px solid var(--line); border-radius: 10px;
  color: var(--muted); font-size: 11px; line-height: 18px; font-weight: 600;
}
.actions { display: flex; gap: 8px; }

.btn {
  height: 32px; display: inline-flex; align-items: center; gap: 7px; padding: 0 12px;
  border: 1px solid #d3d9df; border-radius: 6px; background: var(--soft);
  box-shadow: 0 1px 0 rgba(31, 35, 40, 0.04); font-weight: 600; white-space: nowrap;
}
.btn svg { color: var(--muted); }
.btn-sm { height: 28px; gap: 8px; font-size: 11px; font-family: var(--wide); }
.btn-watch { gap: 4px; padding-right: 8px; }
.btn-watch .dark { color: var(--fg); }
.count {
  min-width: 20px; height: 20px; border-radius: 10px; background: #e6eaed;
  line-height: 20px; text-align: center;
}
.group { display: flex; }
.group .btn:first-child { border-radius: 6px 0 0 6px; }
.group .drop { border-radius: 0 6px 6px 0; border-left: 0; padding: 0 8px; }
.btn.muted, .btn.muted svg { color: #8c959f; }
.btn-green { background: #1f883d; border-color: #1d7c38; color: #fff; }
.btn-green svg { color: #fff; }
.btn-add { font-family: var(--wide); }

.cols { display: grid; grid-template-columns: minmax(0, 1fr) 296px; gap: 24px; }
.filebar { display: flex; align-items: center; gap: 8px; margin-bottom: 16px; }
.stat { display: flex; align-items: center; gap: 4px; color: var(--muted); font-weight: 500; }
.stat b { color: var(--fg); }
.btn-branch { margin-right: 4px; }
.gofile {
  width: 230px; height: 32px; display: flex; align-items: center; gap: 8px; padding: 0 7px 0 12px;
  border: 1px solid var(--line); border-radius: 6px; color: var(--muted);
}
.gofile input { flex: 1; min-width: 0; }
.gofile input::placeholder { color: var(--muted); opacity: 1; }
.gofile kbd {
  width: 18px; height: 18px; border: 1px solid #e1e5e9; border-radius: 5px; color: var(--fg);
  background: var(--soft); font: 11px/15px "Open Sans", sans-serif; text-align: center;
}

.box { border: 1px solid var(--line); border-radius: 6px; overflow: hidden; }
.commit {
  height: 53px; display: flex; align-items: center; padding: 0 29px 0 20px;
  background: var(--soft); border-bottom: 1px solid var(--line);
}
.author { font-weight: 600; margin: 0 8px; }
.msg, .sha { color: var(--muted); }
.sha, .commits { font-size: 11px; font-family: var(--wide); }
.commits { display: flex; align-items: center; gap: 3px; font-weight: 500; margin-left: 16px; }
.commit svg.i16 { color: var(--muted); }
.listing { width: 100%; border-collapse: collapse; color: var(--muted); }
.listing td { height: 40px; padding: 0; }
.listing .name { width: 373px; padding-left: 16px; color: var(--fg); }
.listing .name svg { color: var(--muted); }
.cell { display: flex; align-items: center; gap: 10px; }
.listing .when { text-align: right; padding-right: 17px; }

.readme { margin-top: 16px; }
.readme-tabs { height: 49px; padding-left: 8px; border-bottom: 1px solid var(--line); display: flex; }
.readme-tabs a {
  display: flex; align-items: center; gap: 8px; padding: 0 8px;
  font-weight: 600; box-shadow: inset 0 -2px #fd8c73;
}
.readme-tabs svg { color: var(--muted); }
.readme-body {
  position: relative; display: flex; flex-direction: column; align-items: center;
  padding: 32px; color: var(--muted);
}
.note {
  position: absolute; left: 54px; top: 18px; color: #f00;
  font: 700 17px/24px "Noto Sans CJK KR", sans-serif;
}
.readme h2 { margin-top: 16px; color: var(--fg); font-size: 23px; line-height: 36px; }
.help { margin: 5px 0 31px; font: 11px/18px var(--wide); }

.side section { padding-bottom: 15px; margin-bottom: 15px; border-bottom: 1px solid #d8dee4; }
.side .about { padding-bottom: 11px; }
.side .langs { padding-bottom: 19px; }
.side h3 { font-size: 15px; line-height: 28px; }
.side-head { display: flex; justify-content: space-between; align-items: center; margin: 2px 0 14px; }
.plain, .facts svg { color: var(--muted); }
.desc { color: var(--muted); font: italic 15px/24px var(--wide); white-space: nowrap; }
.facts { margin-top: 13px; color: var(--muted); }
.facts li { height: 29px; display: flex; align-items: center; gap: 12px; }
.small { color: var(--muted); font: 11px/18px var(--wide); }
h3 + .small { margin-top: 14px; }
.small a { color: var(--link); }
.small .underlined { border-bottom: 1px solid; }
.bar { height: 8px; margin-top: 13px; border-radius: 4px; background: #e34c26; }
.lang { display: flex; align-items: center; gap: 4px; padding: 9px 0 0 4px; color: var(--muted); font: 11px/18px var(--wide); }
.lang b { color: var(--fg); }
.dot { width: 8px; height: 8px; margin-right: 8px; border-radius: 4px; background: #e34c26; }
.sub { color: var(--muted); line-height: 18px; }
.card {
  margin-top: 16px; padding: 16px; display: flex; align-items: flex-start;
  border: 1px solid var(--line); border-radius: 6px;
}
.card-logo { width: 32px; height: 32px; border-radius: 16px; box-shadow: 0 2px 6px rgba(31, 35, 40, 0.08); }
.card-text { flex: 1; min-width: 0; margin-left: 8px; }
.card h4 { font-size: 13px; line-height: 21px; width: 134px; }
.card .small { margin: 4px -60px 0 0; }
```
